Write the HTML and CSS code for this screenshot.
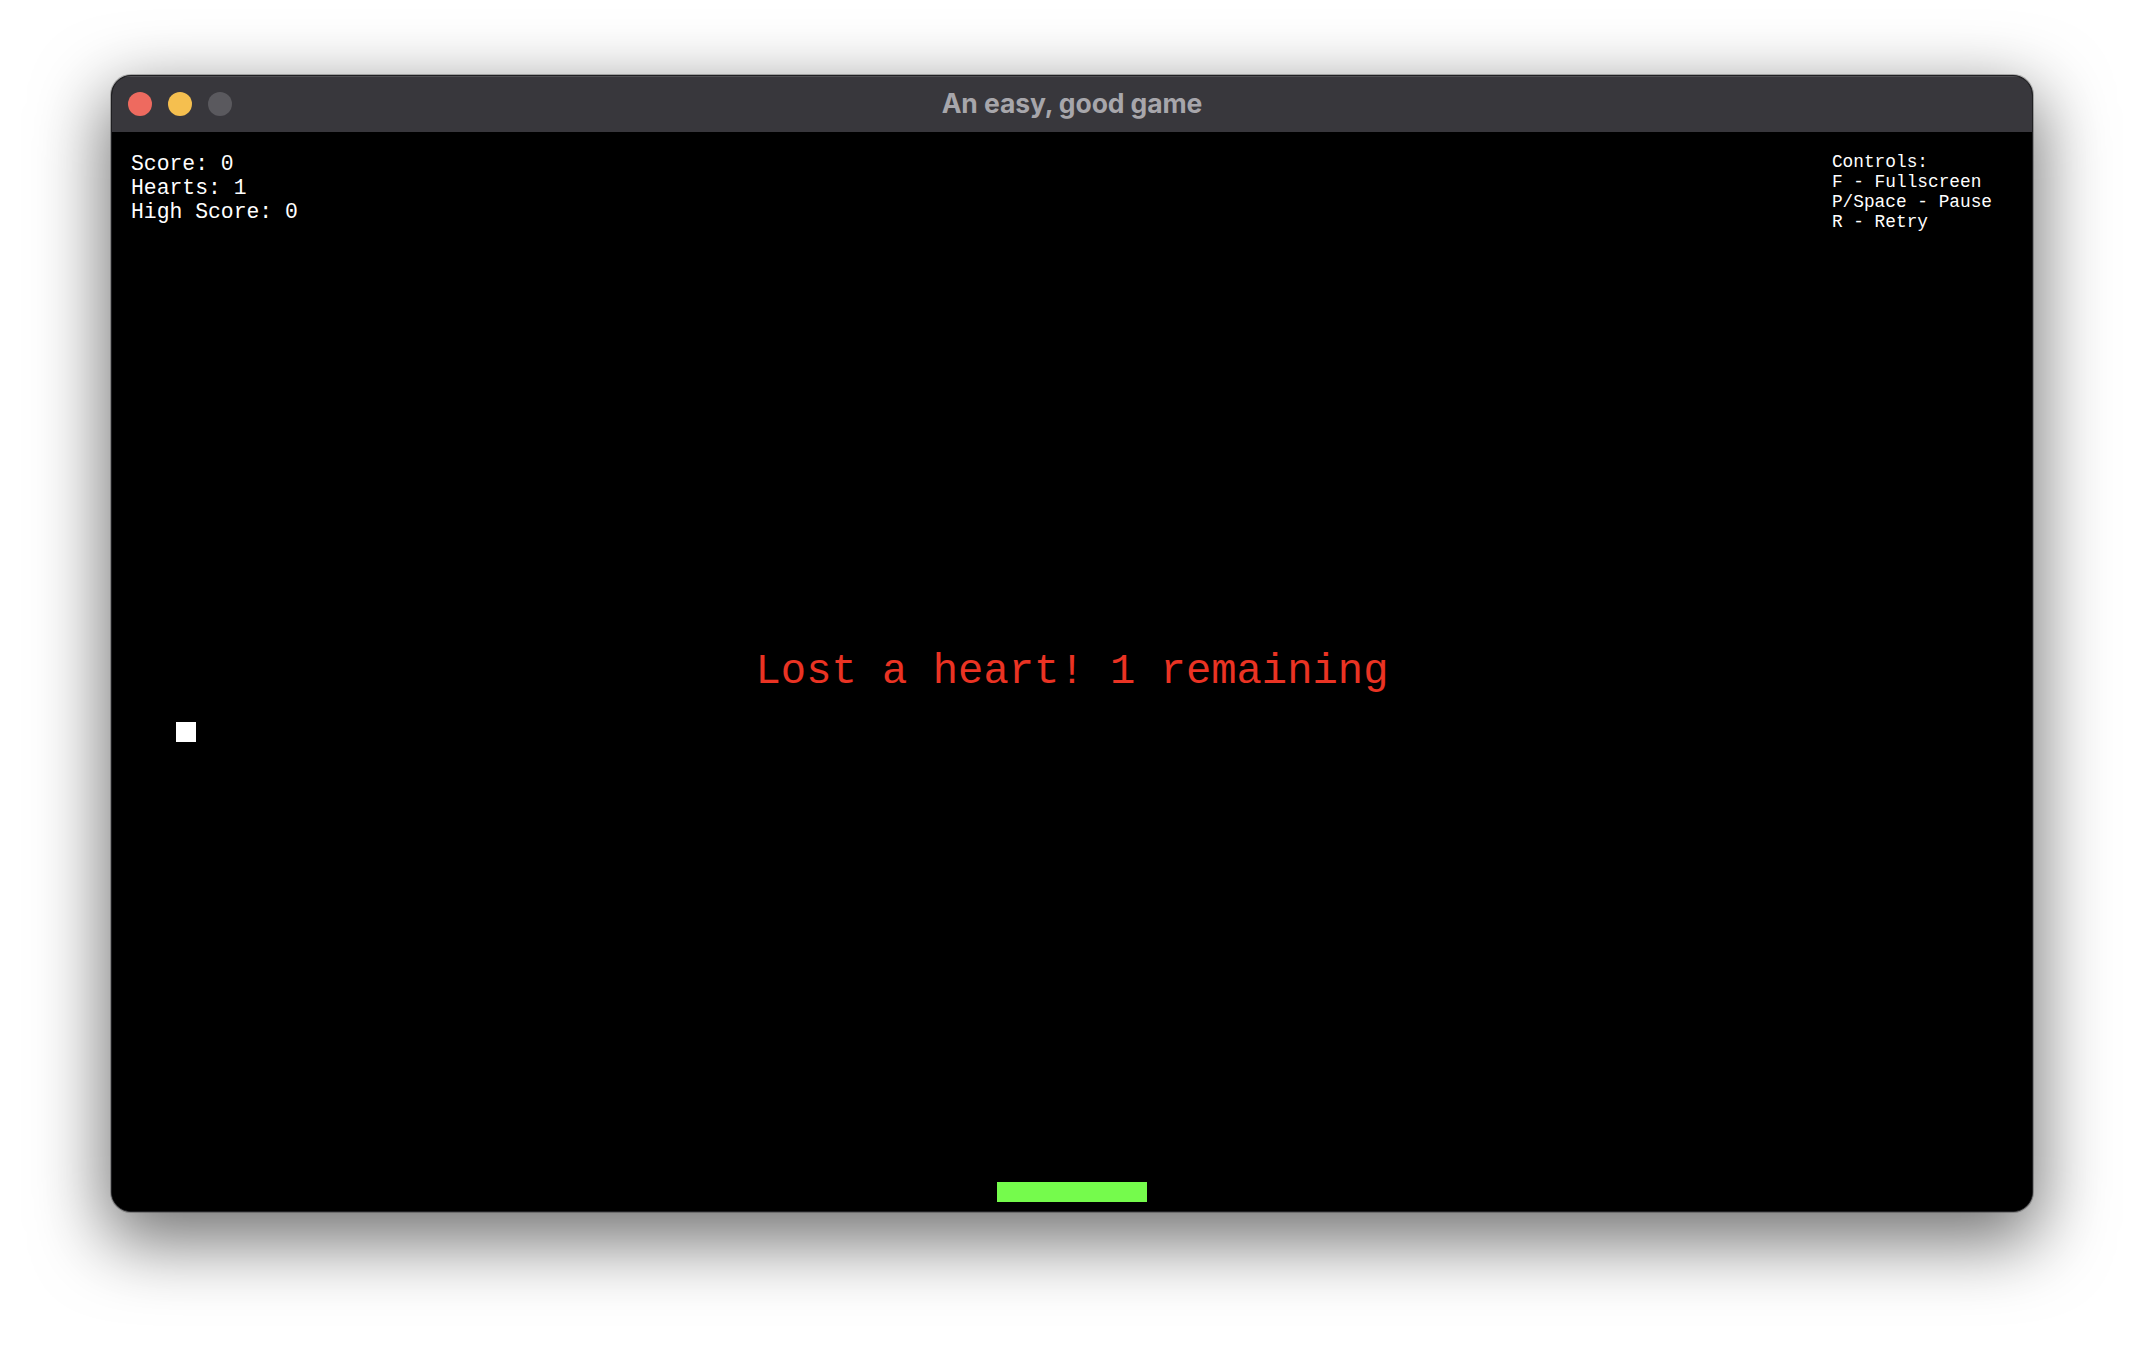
FILE: index.html
```html
<!DOCTYPE html>
<html>
<head>
<meta charset="utf-8">
<title>An easy, good game</title>
<link rel="stylesheet" href="styles.css">
</head>
<body>
<div class="window">
  <div class="titlebar">
    <div class="lights">
      <span class="light red"></span>
      <span class="light yellow"></span>
      <span class="light gray"></span>
    </div>
    <div class="title">An easy, good game</div>
  </div>
  <div class="game">
    <div class="hud">
      <div class="stats">
        <div class="line">Score: 0</div>
        <div class="line">Hearts: 1</div>
        <div class="line">High Score: 0</div>
      </div>
      <div class="controls">
        <div class="line">Controls:</div>
        <div class="line">F - Fullscreen</div>
        <div class="line">P/Space - Pause</div>
        <div class="line">R - Retry</div>
      </div>
    </div>
    <div class="message">Lost a heart! 1 remaining</div>
    <div class="ball"></div>
    <div class="paddle"></div>
  </div>
</div>
</body>
</html>
```

FILE: styles.css
```css
html, body {
  margin: 0;
  padding: 0;
  background: #ffffff;
}
body {
  width: 2144px;
  height: 1360px;
  overflow: hidden;
}
.window {
  box-sizing: border-box;
  margin: 75px 0 0 111px;
  width: 1922px;
  height: 1137px;
  border: 1px solid #1f1f22;
  border-radius: 20px;
  overflow: hidden;
  background: #000;
  box-shadow: 0 24px 70px 6px rgba(0, 0, 0, 0.55), 0 0 0 1px rgba(0, 0, 0, 0.25);
  display: flex;
  flex-direction: column;
}
.titlebar {
  height: 56px;
  flex: 0 0 56px;
  background: #38373c;
  box-shadow: inset 0 1px 0 rgba(255, 255, 255, 0.12);
  position: relative;
  display: flex;
  align-items: center;
  justify-content: center;
}
.lights {
  position: absolute;
  left: 16px;
  top: 16px;
  display: flex;
  gap: 16px;
}
.light {
  width: 24px;
  height: 24px;
  border-radius: 50%;
  display: block;
}
.light.red { background: #ee6a5f; }
.light.yellow { background: #f5bf4f; }
.light.gray { background: #5a595e; }
.title {
  font-family: Inter, "Liberation Sans", sans-serif;
  font-weight: 700;
  font-size: 26.5px;
  color: #a7a6ab;
  letter-spacing: -0.1px;
  line-height: 56px;
  margin-top: -3px;
}
.game {
  position: relative;
  flex: 1 1 auto;
  background: #000;
  font-family: "Liberation Mono", monospace;
  color: #ffffff;
}
.hud {
  display: flex;
  justify-content: space-between;
  align-items: flex-start;
  padding: 20px 40px 0 19px;
}
.line {
  white-space: pre;
}
.stats {
  font-size: 21.4px;
  line-height: 24px;
}
.controls {
  font-size: 17.8px;
  line-height: 20px;
}
.message {
  position: absolute;
  left: 0;
  right: 0;
  top: 515px;
  text-align: center;
  font-size: 42.2px;
  line-height: 50px;
  color: #ea3323;
  white-space: pre;
}
.ball {
  position: absolute;
  left: 64px;
  top: 590px;
  width: 20px;
  height: 20px;
  background: #ffffff;
}
.paddle {
  position: absolute;
  left: 885px;
  top: 1050px;
  width: 150px;
  height: 20px;
  background: #75fb4c;
}
```
